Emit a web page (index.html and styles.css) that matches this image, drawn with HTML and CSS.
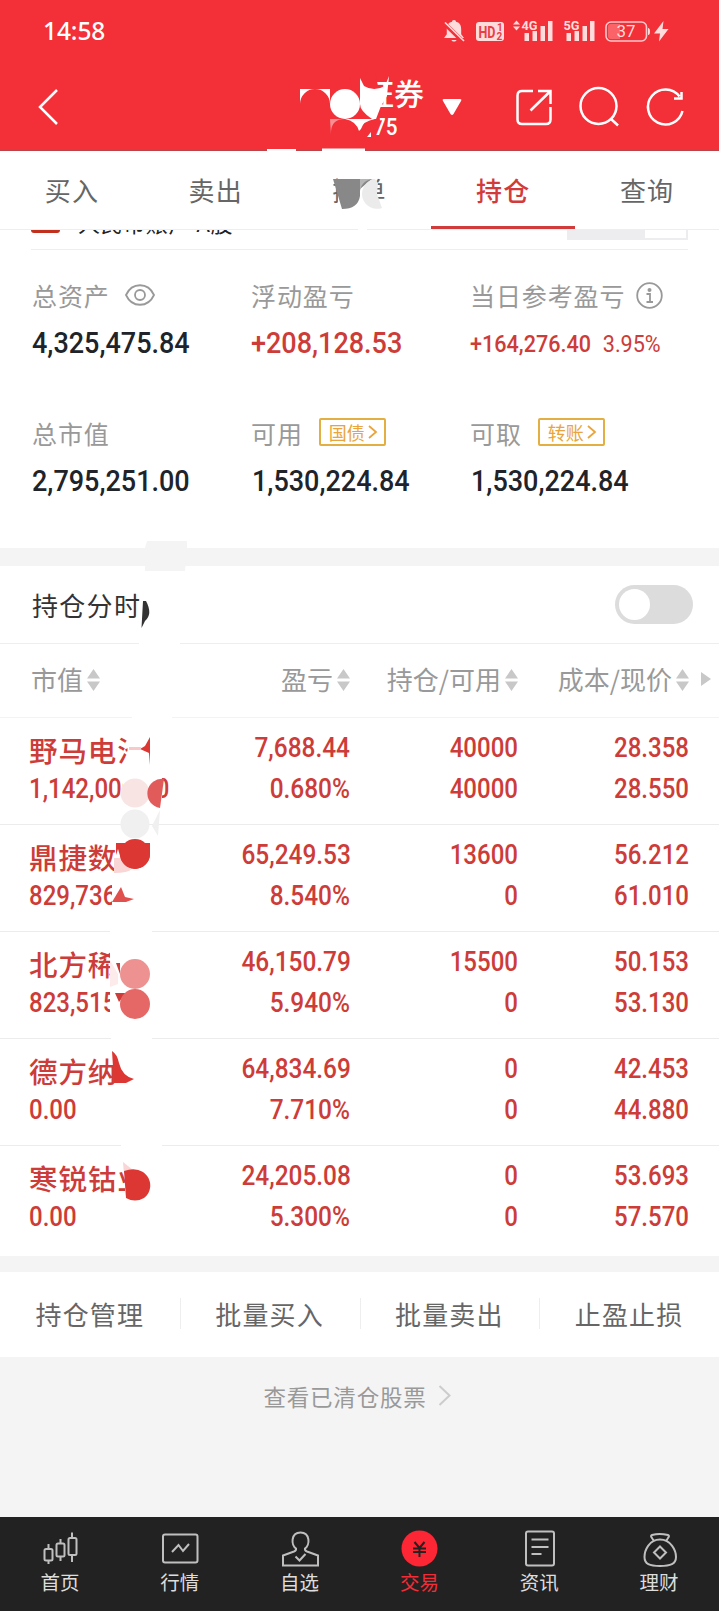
FILE: index.html
```html
<!DOCTYPE html>
<html lang="zh-CN">
<head>
  <meta charset="UTF-8" />
  <meta name="viewport" content="width=device-width, initial-scale=1.0"/>
  <title>持仓</title>
  <link rel="stylesheet" href="styles.css">
</head>
<body>
<div class="page">
  <header class="header">
    <div class="status">
      <span class="clock">14:58</span>
      <svg class="status-icons" width="226" height="24" viewBox="444 19 226 24" fill="#ffdcdc">
        <path d="M455 20c-1.500 0-2 1-2 1.700-4.300 1-5.200 4-5.200 8v4.500l-2.800 3.800h20l-2.800-3.800v-4.500c0-4-.9-7-5.200-8 0-.7-.5-1.700-2-1.700zM452.500 40h5c-.5 2-4.500 2-5 0z"/>
        <path d="M445.500 23.500L464.500 42" stroke="#f32f38" stroke-width="4.500"/>
        <path d="M446 22.500L465 41" stroke="#ffdcdc" stroke-width="1.700"/>
        <rect x="477" y="22" width="28" height="19" rx="3"/>
        <text class="hd" x="479.500" y="38" textLength="17" lengthAdjust="spacingAndGlyphs">HD</text>
        <text class="hd-sub" x="498" y="31">1</text>
        <text class="hd-sub" x="497.500" y="40">2</text>
        <path d="M514 24.500l3.500-4 3.500 4zM514 26.500h7l-3.500 4z"/>
        <text class="net" x="522.500" y="30" textLength="16" lengthAdjust="spacingAndGlyphs">4G</text>
        <path d="M525.500 33h4.500v8h-4.500zM533.500 31h4.500v10h-4.500zM541.500 26h4.500v15h-4.500zM549 21h4.500v20H549z"/>
        <text class="net" x="564.500" y="30" textLength="16" lengthAdjust="spacingAndGlyphs">5G</text>
        <path d="M567.500 33h4.500v8h-4.500zM575.500 31h4.500v10h-4.500zM583.500 26h4.500v15h-4.500zM591 21h4.500v20H591z"/>
        <rect x="607" y="22" width="40.500" height="19" rx="5" fill="none" stroke="#ffc9cb" stroke-width="1.600"/>
        <path d="M612 24h9v15h-9q-3 0-3-3v-9q0-3 3-3z" fill="#fa6468"/>
        <path d="M649 28q2 0 2 3.500t-2 3.500z"/>
        <text class="battery" x="617.500" y="37" textLength="19" lengthAdjust="spacingAndGlyphs">37</text>
        <path d="M664.500 21l-9.500 12.500h6l-1 8 9.500-12.500h-6z"/>
      </svg>
    </div>
    <div class="titlebar">
      <svg class="back" width="22" height="38" viewBox="0 0 22 38"><path d="M20 2L3 19l17 17"/></svg>
      <div class="broker">
        <div class="broker-name">证券</div>
        <div class="broker-no">75</div>
      </div>
      <svg class="caret" width="20" height="17" viewBox="0 0 20 17"><path d="M2 0h16q2 0 1 2l-7.500 13q-1.500 2-3 0L1 2q-1-2 1-2z"/></svg>
      <svg class="tools" width="172" height="42" viewBox="514 86 172 42">
        <path d="M533 91h-11q-4.500 0-4.500 4.500v24q0 4.500 4.500 4.500h24q4.500 0 4.500-4.500V107M538 91h12.500v13M550 91.500l-19.500 19"/>
        <circle cx="598.500" cy="106" r="18"/>
        <path d="M610.500 118.500l7.500 7"/>
        <path d="M679.500 96.500A17.500 17.500 0 1 0 682.500 111M681.500 92v6.500H674"/>
      </svg>
    </div>
  </header>

  <nav class="tabs">
    <a class="tab">买入</a>
    <a class="tab">卖出</a>
    <a class="tab">撤单</a>
    <a class="tab active">持仓</a>
    <a class="tab">查询</a>
  </nav>

  <div class="account">
    <span class="flag"></span>
    <span class="account-name">人民币账户 A股</span>
    <span class="switcher"></span>
  </div>

  <section class="summary">
    <div class="cell">
      <div class="label">总资产
        <svg class="eye" width="30" height="22" viewBox="0 0 30 22"><path d="M1 11C7-2 23-2 29 11 23 24 7 24 1 11z"/><circle cx="15" cy="11" r="5"/></svg>
      </div>
      <div class="value">4,325,475.84</div>
    </div>
    <div class="cell">
      <div class="label">浮动盈亏</div>
      <div class="value red">+208,128.53</div>
    </div>
    <div class="cell">
      <div class="label">当日参考盈亏
        <svg class="info" width="27" height="27" viewBox="0 0 27 27"><circle cx="13.500" cy="13.500" r="12.300"/><circle class="dot" cx="13.500" cy="8" r="2"/><path d="M10.500 12h3.500v7.500M10.500 20h6.500"/></svg>
      </div>
      <div class="value small red">+164,276.40<span class="pct">3.95%</span></div>
    </div>
    <div class="cell">
      <div class="label">总市值</div>
      <div class="value">2,795,251.00</div>
    </div>
    <div class="cell">
      <div class="label">可用
        <span class="tag">国债<svg width="9" height="14" viewBox="0 0 9 14"><path d="M1 1l7 6-7 6"/></svg></span>
      </div>
      <div class="value indent">1,530,224.84</div>
    </div>
    <div class="cell">
      <div class="label">可取
        <span class="tag">转账<svg width="9" height="14" viewBox="0 0 9 14"><path d="M1 1l7 6-7 6"/></svg></span>
      </div>
      <div class="value indent">1,530,224.84</div>
    </div>
  </section>

  <section class="chart-toggle">
    <span>持仓分时</span>
    <span class="toggle"></span>
  </section>

  <section class="holdings">
    <div class="row head">
      <div>市值<i class="sort"></i></div>
      <div>盈亏<i class="sort"></i></div>
      <div>持仓/可用<i class="sort"></i></div>
      <div>成本/现价<i class="sort"></i></div>
      <i class="more"></i>
    </div>
    <div class="row">
      <div><b>野马电池</b><span>1,142,000.00</span></div>
      <div><span>7,688.44</span><span>0.680%</span></div>
      <div><span>40000</span><span>40000</span></div>
      <div><span>28.358</span><span>28.550</span></div>
    </div>
    <div class="row">
      <div><b>鼎捷数</b><span>829,736</span></div>
      <div><span>65,249.53</span><span>8.540%</span></div>
      <div><span>13600</span><span>0</span></div>
      <div><span>56.212</span><span>61.010</span></div>
    </div>
    <div class="row">
      <div><b>北方稀</b><span>823,515</span></div>
      <div><span>46,150.79</span><span>5.940%</span></div>
      <div><span>15500</span><span>0</span></div>
      <div><span>50.153</span><span>53.130</span></div>
    </div>
    <div class="row">
      <div><b>德方纳</b><span>0.00</span></div>
      <div><span>64,834.69</span><span>7.710%</span></div>
      <div><span>0</span><span>0</span></div>
      <div><span>42.453</span><span>44.880</span></div>
    </div>
    <div class="row">
      <div><b>寒锐钴业</b><span>0.00</span></div>
      <div><span>24,205.08</span><span>5.300%</span></div>
      <div><span>0</span><span>0</span></div>
      <div><span>53.693</span><span>57.570</span></div>
    </div>
  </section>

  <section class="actions">
    <a>持仓管理</a>
    <a>批量买入</a>
    <a>批量卖出</a>
    <a>止盈止损</a>
  </section>

  <div class="cleared">查看已清仓股票
    <svg width="13" height="21" viewBox="0 0 13 21"><path d="M1.500 1l10 9.500-10 9.500"/></svg>
  </div>

  <footer class="bottom-nav">
    <a>
      <svg width="40" height="38" viewBox="0 0 40 38"><path d="M8.500 14v5M8.500 31v3M20.500 9v4M20.500 27v4M32 2.500v5M32 26v6"/><rect x="4.500" y="19" width="8" height="11.500" rx="1.500"/><rect x="16.500" y="13.500" width="8" height="13" rx="1.500"/><rect x="28.500" y="8" width="8" height="17" rx="1.500"/></svg>
      首页
    </a>
    <a>
      <svg width="40" height="38" viewBox="0 0 40 38"><rect x="3" y="4.500" width="34.500" height="28" rx="2"/><path d="M12 22l6.500-7 4.500 6 6-7"/></svg>
      行情
    </a>
    <a>
      <svg width="40" height="38" viewBox="0 0 40 38"><path d="M16 18.500C11 15.500 10.500 2.500 20.500 2.500s9.500 13 4.500 16q-.5 2 2 3L38 25.500v10H3v-10l11-4q2.500-1 2-3z"/><path d="M15.500 26.500l4 4 6-6.500"/></svg>
      自选
    </a>
    <a class="current">
      <svg width="40" height="38" viewBox="0 0 40 38"><circle cx="20.500" cy="18.500" r="18"/><path d="M15.500 12l5 6 5-6M14 18.500h13M14 22h13M20.500 18v9"/></svg>
      交易
    </a>
    <a>
      <svg width="40" height="38" viewBox="0 0 40 38"><rect x="7" y="1.500" width="28" height="34" rx="2"/><path d="M12.500 9.500h17M12.500 17h17M12.500 24h10"/></svg>
      资讯
    </a>
    <a>
      <svg width="40" height="38" viewBox="0 0 40 38"><path d="M14.500 10.500c-1-2.500-4-4.500-1.500-5.500 5-1.500 10-1.500 16 0 2.500 1-.5 3-1.500 5.500M21 9.500c-11 0-15.500 11-15.500 17.500 0 7 5 9 15.500 9s16-2 16-9c0-6.500-5-17.500-16-17.500z"/><path d="M21 16.500l6 6-6 6-6-6z"/></svg>
      理财
    </a>
  </footer>

  <!-- privacy mosaic over the account and stock names -->
  <svg class="mosaic" width="719" height="1260" viewBox="0 0 719 1260">
    <path d="M350 72h25l3 14 2 36h-14l-2 20h-8z" fill="#f32f38"/>
    <g fill="#fff">
      <path d="M300 89h30v15a15 15 0 0 0-30 0z"/>
      <circle cx="345" cy="104" r="15"/>
      <path d="M360 78l4 8q10 6 21 0l4-10-2 20-6 10-5 13h-4q-12-8-12-15z"/>
      <path d="M330 119h15q-15 0-14 16z" fill="#fa8f93"/>
      <path d="M345 119h30q-12 2-14 10l-2 2q-3-10-14-12zM367 137l4-5v5zM267 149h29v3h-29zM322 148.500h43v3h-43z"/>
      <path d="M338 174h36v42h-36zM358 227h9v5h-9z"/>
      <path d="M139 640h41v6h-41zM132 714h40v6h-40z"/>
      <path d="M127.500 732h26v33h-26zM123 770h39v42h-39z"/>
      <path d="M116 835h40v70h-44v-20h4zM110 925h42v90h-42zM111 1034h41v8h-41zM121 1141h41v8h-41zM125 1155h38v45h-38z"/>
    </g>
    <path d="M333 179h39l-12 10v7q-2 13-18 13z" fill="#888"/>
    <path d="M375 179a15 15 0 1 0 7 29l-5-14 1-11z" fill="#ebebeb"/>
    <path d="M360 179h15q-13 0-15 12z" fill="#b5b5b5"/>
    <path d="M147 541h40v7l-2 23h-40v-23z" fill="#f4f4f4"/>
    <path d="M143 601h3q7 13-1 20l-3.500 7z" fill="#333"/>
    <path d="M150 737v28l-1-12-9-4 5-3z" fill="#dc3732"/>
    <path d="M129 747h12v3h-12z" fill="#f9c9c9"/>
    <circle cx="135" cy="793" r="14.500" fill="#f9e4e4"/>
    <path d="M164 779a14 14 0 1 0-4 29z" fill="#e25b5b"/>
    <circle cx="135" cy="824" r="14.500" fill="#f0f0f0"/>
    <path d="M160 810l-2 26-6-10z" fill="#f0f0f0"/>
    <path d="M114 858h8l10 11q-4 4-18 4z" fill="#f9d5d5"/>
    <path d="M116 843h34v11a15 15 0 0 1-29 5l-3-10-2 6z" fill="#dc3732"/>
    <circle cx="135" cy="854" r="15" fill="#dc3732"/>
    <path d="M112 902l9-15 4 10 9 2-8 3z" fill="#e0504c"/>
    <path d="M110 960l8 14v10l-8 3z" fill="#fdeaea"/>
    <path d="M116 963h4v11zM115 993h11l-7 9z" fill="#cf3b38"/>
    <circle cx="135" cy="974" r="15" fill="#ed9290"/>
    <circle cx="135" cy="1004" r="15" fill="#e56866"/>
    <path d="M112 1051q5 3 7 12 3 13 15 16l-8 4h-12z" fill="#dc3732"/>
    <path d="M123 1162l10 8-9 4z" fill="#f9d5d5"/>
    <path d="M124 1171q11-4 19 1c10 7 9 20 1 26q-9 5-18 0z" fill="#dc3732"/>
  </svg>
</div>
</body>
</html>
```
FILE: styles.css
```css
* {
  box-sizing: border-box;
}
body {
  margin: 0;
  background: #f4f4f4;
  font-family: "Noto Sans CJK SC", sans-serif;
  font-size: 26px;
  color: #666;
}
svg {
  display: block;
  fill: none;
  overflow: visible;
}
.page {
  position: relative;
  width: 719px;
  height: 1611px;
  display: flex;
  flex-direction: column;
  overflow: hidden;
}
.mosaic {
  position: absolute;
  left: 0;
  top: 0;
}

/* header */
.header {
  height: 151px;
  background: #f32f38;
  border-bottom: 1px solid #b9454a;
  color: #fff;
}
.status {
  height: 62px;
  padding: 0 50px 0 43px;
  display: flex;
  align-items: center;
  justify-content: space-between;
}
.clock {
  font: 500 24.5px/64px "Noto Sans", sans-serif;
  letter-spacing: -0.1px;
}
.status-icons {
  fill: #ffdcdc;
}
.status-icons text {
  font-family: Roboto, sans-serif;
  font-weight: bold;
}
.hd {
  font-size: 16px;
  fill: #e83f47;
}
.status-icons .hd-sub {
  font-size: 10px;
  fill: #e83f47;
}
.net {
  font-size: 13.5px;
}
.status-icons .battery {
  font-size: 17px;
  font-weight: 400;
}
.titlebar {
  display: flex;
  height: 88px;
  align-items: center;
  padding: 2px 33px 0 37px;
}
.titlebar svg {
  stroke: #fff;
  stroke-width: 2.5;
}
.broker {
  width: 62px;
  margin-left: 305px;
}
.broker-name {
  font-size: 30px;
  font-weight: 500;
  line-height: 40px;
  white-space: nowrap;
}
.broker-no {
  font: 500 24px/30px Roboto, sans-serif;
  padding-left: 10px;
  transform: scaleX(0.86);
  transform-origin: 10px 0;
}
.titlebar .caret {
  margin-left: 16px;
  fill: #fff;
  stroke: none;
}
.tools {
  margin-left: auto;
}

/* tabs */
.tabs {
  display: flex;
  height: 79px;
  background: #fff;
  border-bottom: 1px solid #eee;
}
.tab {
  flex: 1;
  text-align: center;
  line-height: 77px;
  letter-spacing: 1.2px;
}
.tab.active {
  color: #d23b3b;
  font-weight: 500;
  border-bottom: 3px solid #d23b3b;
}
.account {
  display: flex;
  padding: 0 31px;
  height: 19px;
  background: #fff;
  overflow: hidden;
}
.flag {
  width: 29px;
  height: 3px;
  background: #c0301c;
  border-radius: 0 0 3px 3px;
}
.account-name {
  height: 30px;
  margin: -23px 0 0 18px;
  font-size: 22px;
  line-height: 30px;
  color: #222;
  letter-spacing: 0.6px;
}
.switcher {
  margin-left: auto;
  width: 121px;
  height: 10px;
  border: 2px solid #ededf0;
  border-top: 0;
  border-left: 78px solid #ededf0;
}

/* assets */
.summary {
  position: relative;
  display: grid;
  grid-template-columns: 219px 219px 1fr;
  grid-auto-rows: 138px;
  height: 299px;
  padding: 23px 0 0 32px;
  background: #fff;
}
.summary::before {
  content: "";
  position: absolute;
  top: 0;
  left: 31px;
  right: 31px;
  border-top: 1px solid #eee;
}
.label {
  display: flex;
  align-items: center;
  height: 46px;
  font-size: 25px;
  line-height: 42px;
  letter-spacing: 0.9px;
  color: #999;
  white-space: nowrap;
}
.label > svg {
  stroke: #999;
  stroke-width: 1.8;
}
.eye {
  margin-left: 15px;
}
.info {
  margin-left: 11px;
}
.info .dot {
  fill: #999;
  stroke: none;
}
.value {
  font: 500 30px/50px Roboto, sans-serif;
  color: #20242a;
  white-space: nowrap;
  transform: scaleX(0.9);
  transform-origin: 0 0;
}
.value.indent {
  margin-left: 1px;
}
.value.red {
  color: #cd3c38;
}
.value.small {
  font-size: 24px;
  line-height: 52px;
}
.pct {
  font-weight: 400;
  margin-left: 13px;
}
.tag {
  display: flex;
  align-items: center;
  gap: 3px;
  height: 28px;
  margin: -2px 0 0 16px;
  padding: 0 7px 0 8px;
  border: 2px solid #e3ae42;
  border-radius: 2px;
  font-size: 18px;
  line-height: 22px;
  letter-spacing: 0;
  color: #e9a53c;
}
.tag svg {
  stroke: #e9a53c;
  stroke-width: 1.8;
}

.chart-toggle {
  display: flex;
  justify-content: space-between;
  align-items: center;
  height: 78px;
  margin-top: 18px;
  padding: 0 26px 0 32px;
  background: #fff;
  border-bottom: 1px solid #eee;
  color: #333;
  letter-spacing: 1.3px;
}
.toggle {
  width: 78px;
  height: 39px;
  padding: 4px;
  border-radius: 20px;
  background: #dcdcdc;
}
.toggle::before {
  content: "";
  display: block;
  width: 31px;
  height: 31px;
  border-radius: 50%;
  background: #fff;
}

/* holdings table */
.holdings {
  height: 612px;
  background: #fff;
}
.row {
  position: relative;
  display: grid;
  grid-template-columns: 200px 120px 168px 171px;
  height: 107px;
  padding: 10px 30px 0;
  border-bottom: 1px solid #ececec;
  color: #cd3c38;
}
.row:last-child {
  border: 0;
}
.row > div {
  text-align: right;
  white-space: nowrap;
}
.row > div:first-child {
  text-align: left;
}
.row span {
  display: block;
  font: 500 27px/41px Roboto, sans-serif;
  transform: scaleX(0.89);
  transform-origin: 100% 0;
}
.row div:first-child span {
  margin-left: -1px;
  transform-origin: 0 0;
}
.row div:nth-child(2) span {
  transform: scaleX(0.905);
}
.row b {
  display: block;
  height: 41px;
  margin-left: -1px;
  font-size: 28.5px;
  font-weight: 500;
  line-height: 44px;
  letter-spacing: 0.9px;
}
.row.head {
  height: 74px;
  padding-top: 0;
  line-height: 70px;
  color: #999;
  border-color: #f3f3f3;
}
.row.head > div:first-child {
  padding-left: 1px;
}
.sort {
  display: inline-block;
  width: 13px;
  height: 22px;
  margin-left: 4px;
  vertical-align: -1px;
  background: #c8c8c8;
  clip-path: polygon(50% 0, 100% 43%, 0 43%, 0 57%, 100% 57%, 50% 100%, 0 57%, 0 43%);
}
.more {
  position: absolute;
  left: 701px;
  top: 28px;
  border: 7px solid transparent;
  border-left: 10px solid #c8c8c8;
  border-right: 0;
}

.actions {
  display: flex;
  height: 85px;
  margin-top: 16px;
  background: #fff;
}
.actions a {
  flex: 1;
  text-align: center;
  line-height: 83px;
  letter-spacing: 1.2px;
  background: linear-gradient(#eee, #eee) no-repeat 0 26px / 1px 31px;
}
.actions a:first-child {
  background: none;
}
.cleared {
  display: flex;
  justify-content: center;
  align-items: center;
  gap: 11px;
  height: 160px;
  padding: 0 5px 83px 0;
  font-size: 22.5px;
  letter-spacing: 0.8px;
  color: #999;
}
.cleared svg {
  stroke: #ccc;
  stroke-width: 2;
}

/* bottom navigation */
.bottom-nav {
  display: flex;
  height: 94px;
  background: #222;
  color: #ddd;
}
.bottom-nav a {
  flex: 1;
  display: flex;
  flex-direction: column;
  align-items: center;
  padding-top: 13px;
  font-size: 19.5px;
  line-height: 28px;
}
.bottom-nav svg {
  stroke: #bfbfbf;
  stroke-width: 2;
}
.bottom-nav .current {
  color: #f22d37;
}
.bottom-nav .current circle {
  fill: #fc2634;
  stroke: none;
}
.bottom-nav .current path {
  stroke: #222;
}
```
